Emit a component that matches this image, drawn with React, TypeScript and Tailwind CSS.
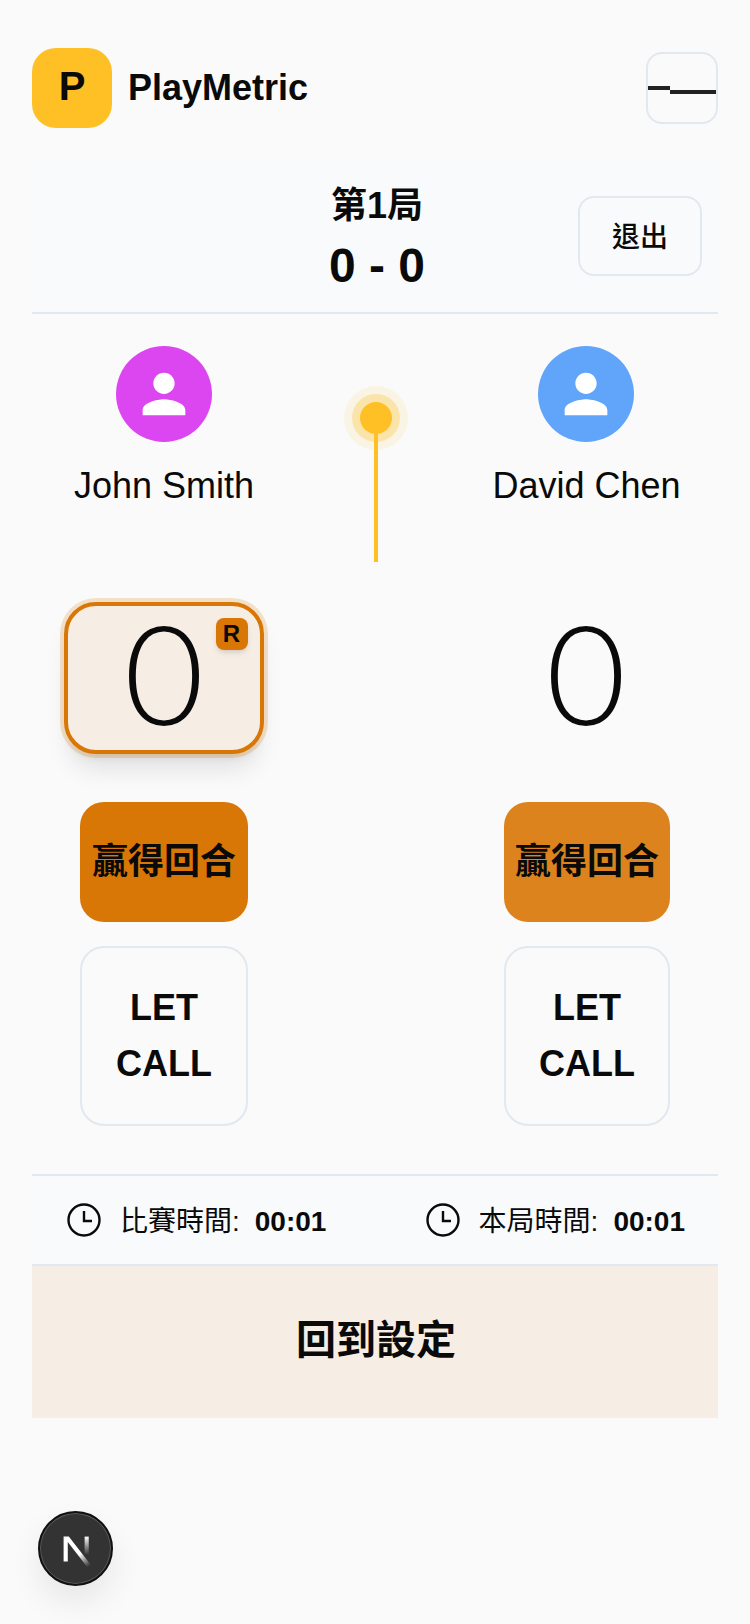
import React from "react";
import { MdPerson } from "react-icons/md";

const players = [
  { name: "John Smith", avatar: "bg-[#dc46f0]", win: "w-[168px] bg-[#d97706]", serving: true },
  { name: "David Chen", avatar: "bg-[#60a5fa]", win: "w-[166px] ml-[2px] bg-[#dd831d]", serving: false },
];

function PlayerColumn({ player }: { player: (typeof players)[number] }) {
  return (
    <div className="flex flex-col items-center pt-8">
      <div className={`w-24 h-24 rounded-full flex items-center justify-center ${player.avatar}`}>
        <MdPerson className="text-white" size={64} />
      </div>
      <p className={`mt-[24px] text-[36px] leading-10 whitespace-nowrap ${player.serving ? "" : "ml-[1px]"}`}>{player.name}</p>

      {/* score box, only the serving player gets the frame */}
      <div
        className={`relative mt-[96px] w-[200px] h-[152px] pb-3 rounded-[32px] border-4 flex items-center justify-center ${
          player.serving
            ? "border-[#d97706] bg-[#f6ede4] shadow-[0_0_0_4px_rgba(217,119,6,0.2),0_20px_25px_-5px_rgba(0,0,0,0.1),0_8px_10px_-6px_rgba(0,0,0,0.1)]"
            : "border-transparent"
        }`}
      >
        <span className="font-['Lato',sans-serif] font-light text-[138px] leading-none">0</span>
        {player.serving && (
          <span className="absolute top-3 right-3 w-8 h-8 pr-px rounded-lg bg-[#d97706] shadow-md flex items-center justify-center text-[24px] font-bold leading-none">
            R
          </span>
        )}
      </div>

      <button className={`mt-12 h-[120px] rounded-3xl text-[36px] font-bold whitespace-nowrap ${player.win}`}>
        贏得回合
      </button>
      <button className={`mt-6 h-[180px] rounded-3xl border-2 border-[#e2e8f0] text-[36px] font-bold leading-[56px] ${player.serving ? "w-[168px]" : "w-[166px] ml-[2px]"}`}>
        LET
        <br />
        CALL
      </button>
    </div>
  );
}

function ClockIcon() {
  return (
    <svg width="36" height="36" viewBox="0 0 36 36" fill="none" stroke="currentColor" strokeWidth="2.4" className="shrink-0">
      <circle cx="18" cy="18" r="15.5" />
      <path d="M18 9v10h8" />
    </svg>
  );
}

function Timer({ label, value }: { label: string; value: string }) {
  return (
    <div className="flex items-center">
      <ClockIcon />
      <span className="ml-[18px] pt-1 text-[28px]">{label}:</span>
      <span className="ml-[15px] pt-1 text-[28px] font-bold">{value}</span>
    </div>
  );
}

export default function App() {
  return (
    <div className="relative min-h-[1624px] bg-[#fafafa] px-8 pt-12 text-[#0a0a0a] font-['Liberation_Sans','Noto_Sans_CJK_TC',sans-serif]">
      {/* header */}
      <header className="flex items-center justify-between">
        <div className="flex items-center gap-4">
          <div className="w-20 h-20 pb-1 rounded-3xl bg-[#fec024] flex items-center justify-center text-[40px] font-bold">P</div>
          <span className="text-[36px] font-bold">PlayMetric</span>
        </div>
        <button className="relative w-[72px] h-[72px] rounded-2xl border-2 border-[#e2e8f0]">
          <span className="absolute left-0 top-[32px] w-[22px] h-1 bg-[#222]" />
          <span className="absolute left-[22px] top-[36px] w-[46px] h-1 bg-[#222]" />
        </button>
      </header>

      {/* set + score */}
      <section className="relative mt-8 h-[154px] bg-[#f8fafc] border-b-2 border-[#e2e8f0] flex flex-col items-center pl-1 pt-[26px]">
        <p className="text-[36px] font-bold leading-10">第1局</p>
        <p className="mt-[10px] text-[48px] font-bold leading-[60px]">0 - 0</p>
        <button className="absolute right-4 top-9 w-[124px] h-20 pt-1 rounded-2xl border-2 border-[#e2e8f0] text-[28px] font-medium">退出</button>
      </section>

      {/* players */}
      <section className="grid grid-cols-[264px_1fr_264px]">
        <PlayerColumn player={players[0]} />
        <div className="flex flex-col items-center pl-[2px] pt-[88px]">
          <div className="w-8 h-8 rounded-full bg-[#fec024] shadow-[0_0_0_8px_rgba(254,192,36,0.3),0_0_0_16px_rgba(254,192,36,0.1)]" />
          <div className="w-1 h-32 bg-[#fec024]" />
        </div>
        <PlayerColumn player={players[1]} />
      </section>

      {/* timers */}
      <section className="mt-12 h-[92px] bg-[#f8fafc] border-y-2 border-[#e2e8f0] flex items-center justify-between pl-[34px] pr-[33px]">
        <Timer label="比賽時間" value="00:01" />
        <Timer label="本局時間" value="00:01" />
      </section>

      <button className="block w-full h-[152px] pb-1 pl-[2px] bg-[#f6ede4] text-[40px] font-bold">回到設定</button>

      {/* next dev indicator */}
      <div className="absolute left-[38px] top-[1511px] w-[75px] h-[75px] rounded-full bg-[#333] border-2 border-[#111] shadow-[inset_0_0_0_1px_rgba(255,255,255,0.2),0_16px_32px_rgba(0,0,0,0.08)] flex items-center justify-center">
        <svg width="62" height="62" viewBox="0 0 180 180" fill="none" className="shrink-0">
          <defs>
            <linearGradient id="nDiag" x1="100" y1="105" x2="128" y2="140" gradientUnits="userSpaceOnUse">
              <stop stopColor="#fff" />
              <stop offset="1" stopColor="#fff" stopOpacity="0" />
            </linearGradient>
            <linearGradient id="nBar" x1="121" y1="54" x2="120.8" y2="106.9" gradientUnits="userSpaceOnUse">
              <stop stopColor="#fff" />
              <stop offset="1" stopColor="#fff" stopOpacity="0" />
            </linearGradient>
          </defs>
          <path d="M149.508 157.52L69.142 54H54V125.97H66.114V69.384L139.999 164.845C143.333 162.614 146.509 160.165 149.508 157.52Z" fill="url(#nDiag)" />
          <rect x="115" y="54" width="12" height="72" fill="url(#nBar)" />
        </svg>
      </div>
    </div>
  );
}
